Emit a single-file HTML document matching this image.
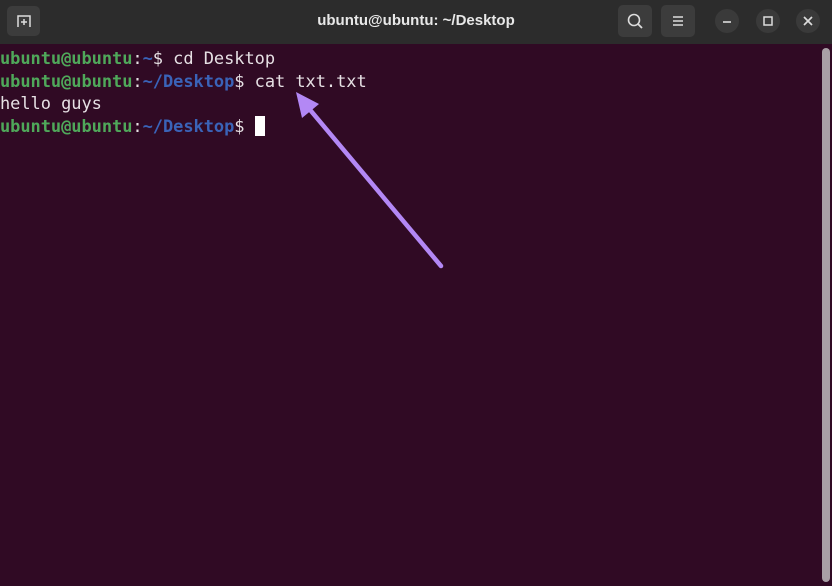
<!DOCTYPE html>
<html><head><style>
html,body{margin:0;padding:0;width:832px;height:586px;overflow:hidden;background:#300a24;}
.bar{position:absolute;left:0;top:0;width:832px;height:44px;background:#2c2c2c;}
.title{position:absolute;left:0;right:0;top:12px;text-align:center;color:#e8e8e8;font:bold 15px "Liberation Sans",sans-serif;}
.btn{position:absolute;background:#3c3c3c;border-radius:5px;}
.rb{position:absolute;width:24px;height:24px;border-radius:50%;background:#3a3a3a;top:9px;}
.term{position:absolute;left:0;top:48px;font:17px/22.6px "DejaVu Sans Mono","Liberation Mono",monospace;color:#e6e0e4;white-space:pre;letter-spacing:-0.05px;}
.g{color:#4fa85a;font-weight:bold}.b{color:#3a63b8;font-weight:bold}
.cur{display:inline-block;width:10px;height:20px;background:#fff;vertical-align:-4px;}
.sb{position:absolute;left:822px;top:48px;width:8px;height:534px;background:#a9a0a6;border-radius:4px;}
</style></head><body>
<div class="bar">
<div class="btn" style="left:7px;top:6px;width:33px;height:30px;"></div>
<svg style="position:absolute;left:16px;top:14px" width="16" height="14" viewBox="0 0 16 14"><path d="M2 13V2h12v11" fill="none" stroke="#ddd" stroke-width="1.5"/><path d="M8 5v6M5 8h6" stroke="#ddd" stroke-width="1.5"/></svg>
<div class="title">ubuntu@ubuntu: ~/Desktop</div>
<div class="btn" style="left:618px;top:5px;width:34px;height:32px;"></div>
<svg style="position:absolute;left:626px;top:12px" width="18" height="18" viewBox="0 0 18 18"><circle cx="8" cy="8" r="5.5" fill="none" stroke="#ddd" stroke-width="1.6"/><path d="M12 12l4 4" stroke="#ddd" stroke-width="1.8"/></svg>
<div class="btn" style="left:661px;top:5px;width:34px;height:32px;"></div>
<svg style="position:absolute;left:671px;top:14px" width="14" height="14" viewBox="0 0 14 14"><path d="M2 3h10M2 7h10M2 11h10" stroke="#ddd" stroke-width="1.6"/></svg>
<div class="rb" style="left:715px"></div>
<svg style="position:absolute;left:721px;top:15px" width="12" height="12"><path d="M2 7h8" stroke="#ddd" stroke-width="1.6"/></svg>
<div class="rb" style="left:756px"></div>
<svg style="position:absolute;left:762px;top:15px" width="12" height="12"><rect x="2" y="2" width="8" height="8" fill="none" stroke="#ddd" stroke-width="1.5"/></svg>
<div class="rb" style="left:796px"></div>
<svg style="position:absolute;left:802px;top:15px" width="12" height="12"><path d="M2 2l8 8M10 2l-8 8" stroke="#ddd" stroke-width="1.7"/></svg>
</div>
<div class="term"><span class="g">ubuntu@ubuntu</span>:<span class="b">~</span>$ cd Desktop
<span class="g">ubuntu@ubuntu</span>:<span class="b">~/Desktop</span>$ cat txt.txt
hello guys
<span class="g">ubuntu@ubuntu</span>:<span class="b">~/Desktop</span>$ <span class="cur"></span></div>
<div class="sb"></div>
<svg style="position:absolute;left:0;top:0" width="832" height="586"><path d="M441 266L306 105" stroke="#b388f5" stroke-width="4.5" stroke-linecap="round"/><path d="M296 92L302 118L319 104Z" fill="#b388f5"/></svg>
</body></html>
